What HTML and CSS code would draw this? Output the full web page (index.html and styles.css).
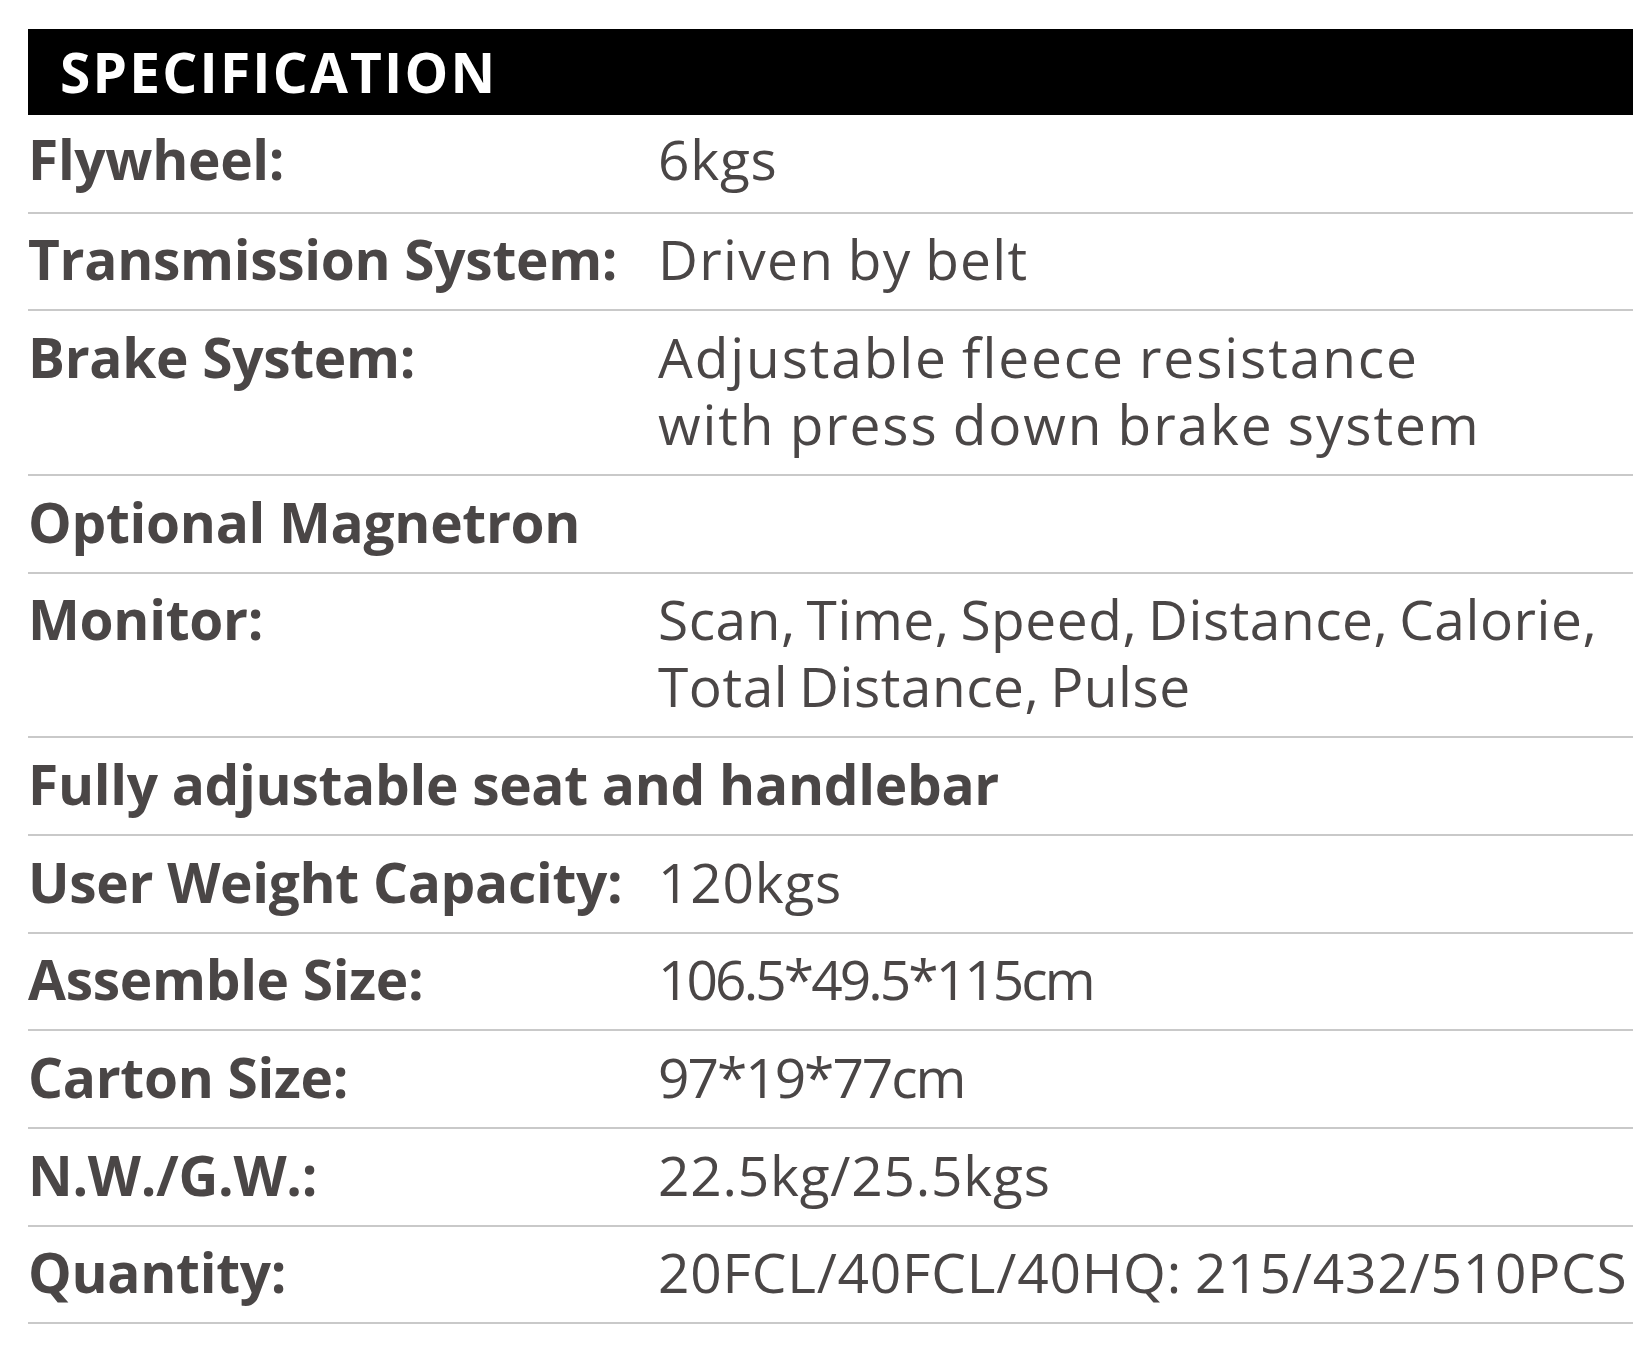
FILE: index.html
```html
<!DOCTYPE html>
<html lang="en">
<head>
<meta charset="utf-8">
<title>Specification</title>
<link rel="stylesheet" href="styles.css">
</head>
<body>
<section class="spec">
  <h1 class="spec__title">SPECIFICATION</h1>
  <div class="spec__row spec__row--first">
    <div class="spec__label">Flywheel:</div>
    <div class="spec__value">6kgs</div>
  </div>
  <div class="spec__row">
    <div class="spec__label">Transmission System:</div>
    <div class="spec__value spec__value--text">Driven by belt</div>
  </div>
  <div class="spec__row">
    <div class="spec__label">Brake System:</div>
    <div class="spec__value spec__value--wide">Adjustable fleece resistance<br>with press down brake system</div>
  </div>
  <div class="spec__row">
    <div class="spec__label spec__label--full">Optional Magnetron</div>
  </div>
  <div class="spec__row">
    <div class="spec__label">Monitor:</div>
    <div class="spec__value spec__value--list">Scan, Time, Speed, Distance, Calorie,<br>Total Distance, Pulse</div>
  </div>
  <div class="spec__row">
    <div class="spec__label spec__label--full">Fully adjustable seat and handlebar</div>
  </div>
  <div class="spec__row">
    <div class="spec__label">User Weight Capacity:</div>
    <div class="spec__value">120kgs</div>
  </div>
  <div class="spec__row">
    <div class="spec__label">Assemble Size:</div>
    <div class="spec__value spec__value--tight">106.5*49.5*115cm</div>
  </div>
  <div class="spec__row">
    <div class="spec__label">Carton Size:</div>
    <div class="spec__value spec__value--num">97*19*77cm</div>
  </div>
  <div class="spec__row">
    <div class="spec__label">N.W./G.W.:</div>
    <div class="spec__value">22.5kg/25.5kgs</div>
  </div>
  <div class="spec__row">
    <div class="spec__label">Quantity:</div>
    <div class="spec__value">20FCL/40FCL/40HQ: 215/432/510PCS</div>
  </div>
</section>
</body>
</html>
```
FILE: styles.css
```css
html, body {
  margin: 0;
  padding: 0;
  background: #ffffff;
}

body {
  font-family: "Open Sans", "Lato", sans-serif;
  color: #4a4646;
}

.spec {
  width: 1605px;
  margin: 29px 0 0 28px;
}

.spec__title {
  margin: 0;
  height: 86px;
  background: #000000;
  color: #ffffff;
  font-size: 55px;
  font-weight: 700;
  line-height: 86px;
  letter-spacing: 2.2px;
  padding-left: 32px;
  box-sizing: border-box;
}

.spec__row {
  display: grid;
  grid-template-columns: 630px 1fr;
  padding: 11.7px 0 17px 0;
  border-bottom: 2px solid #c9c9c9;
  font-size: 55px;
  line-height: 67px;
}

.spec__row--first {
  padding-top: 9.5px;
  padding-bottom: 20px;
}

.spec__label {
  font-weight: 700;
  letter-spacing: -0.3px;
  white-space: nowrap;
}

.spec__label--full {
  grid-column: 1 / -1;
}

.spec__value {
  font-weight: 400;
  letter-spacing: 0.8px;
  word-spacing: -2px;
  white-space: nowrap;
}

.spec__value--text {
  letter-spacing: 1.3px;
}

.spec__value--wide {
  letter-spacing: 1.9px;
}

.spec__value--list {
  letter-spacing: 0.55px;
  word-spacing: -4px;
}

.spec__value--num {
  letter-spacing: -2px;
}

.spec__value--tight {
  letter-spacing: -2.9px;
}
```
